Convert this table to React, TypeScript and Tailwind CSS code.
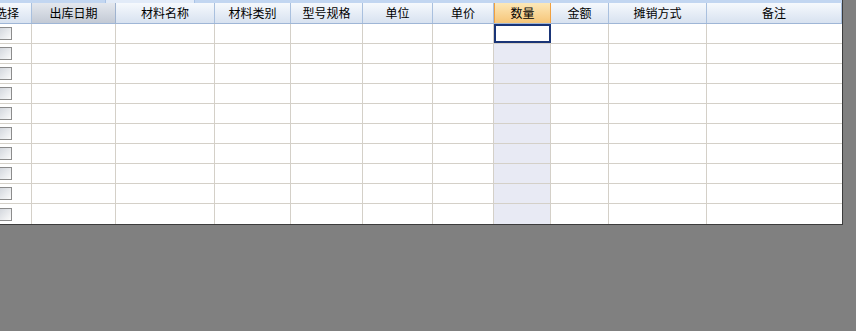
import React from 'react';

const COLS = [
  { title: '选择', w: 32 },
  { title: '出库日期', w: 84 },
  { title: '材料名称', w: 99 },
  { title: '材料类别', w: 76 },
  { title: '型号规格', w: 72 },
  { title: '单位', w: 70 },
  { title: '单价', w: 61 },
  { title: '数量', w: 57 },
  { title: '金额', w: 58 },
  { title: '摊销方式', w: 98 },
  { title: '备注', w: 135 },
];

const ROWS = 10;
const QTY = 7;

const Checkbox = () => (
  <div className="w-[13px] h-[13px] border border-[#8c8c8c] bg-gradient-to-br from-[#d3d7dd] to-[#fbfbfb] -ml-[1px]" />
);

const HeaderCell = ({ title, w, idx }: { title: string; w: number; idx: number }) => {
  let cls = 'bg-gradient-to-b from-[#f6f9fd] to-[#d8e2f0] border-r border-[#a9c0de]';
  if (idx === 1) cls = 'bg-gradient-to-b from-[#e4e8ee] to-[#c3cad5] border-r border-[#9fb3cf]';
  if (idx === QTY) cls = 'bg-gradient-to-b from-[#fce8b8] to-[#f6c577] border-x border-[#f0a040]';
  return (
    <div
      style={{ width: w }}
      className={`h-[20px] shrink-0 flex items-center overflow-hidden ${idx === 0 ? 'justify-start' : 'justify-center'} ${cls}`}
    >
      <span className={idx === 0 ? '-ml-[5px]' : ''}>{title}</span>
    </div>
  );
};

const App = () => {
  return (
    <div
      className="w-[856px] h-[331px] bg-[#808080] text-[12px] text-black overflow-hidden"
      style={{ fontFamily: '"Noto Sans CJK SC", "Liberation Sans", sans-serif' }}
    >
      <div className="w-[843px] bg-white border-r border-b border-[#3c3c3c]">
        <div className="h-[3px] flex bg-[#c2d6f1]">
          <div className="w-[105px]" />
          <div className="w-[90px] bg-[#e2ebf8] border-x border-[#a9c3e6]" />
        </div>
        <div className="flex border-b border-[#9fb6d6] leading-[20px]">
          {COLS.map((c, i) => (
            <HeaderCell key={i} title={c.title} w={c.w} idx={i} />
          ))}
        </div>
        {Array.from({ length: ROWS }).map((_, r) => (
          <div key={r} className="flex border-b border-[#d4d0c8] h-[20px] last:border-b-0">
            {COLS.map((c, i) => {
              const active = r === 0 && i === QTY;
              const bg = i === QTY && !active ? 'bg-[#e8eaf4]' : 'bg-white';
              return (
                <div
                  key={i}
                  style={{ width: c.w }}
                  className={`shrink-0 h-full flex items-center ${bg} ${
                    active ? 'border-2 border-[#1a3577]' : 'border-r border-[#d4d0c8]'
                  } ${i === COLS.length - 1 ? 'border-r-0' : ''}`}
                >
                  {i === 0 && <Checkbox />}
                </div>
              );
            })}
          </div>
        ))}
      </div>
    </div>
  );
};

export default App;
